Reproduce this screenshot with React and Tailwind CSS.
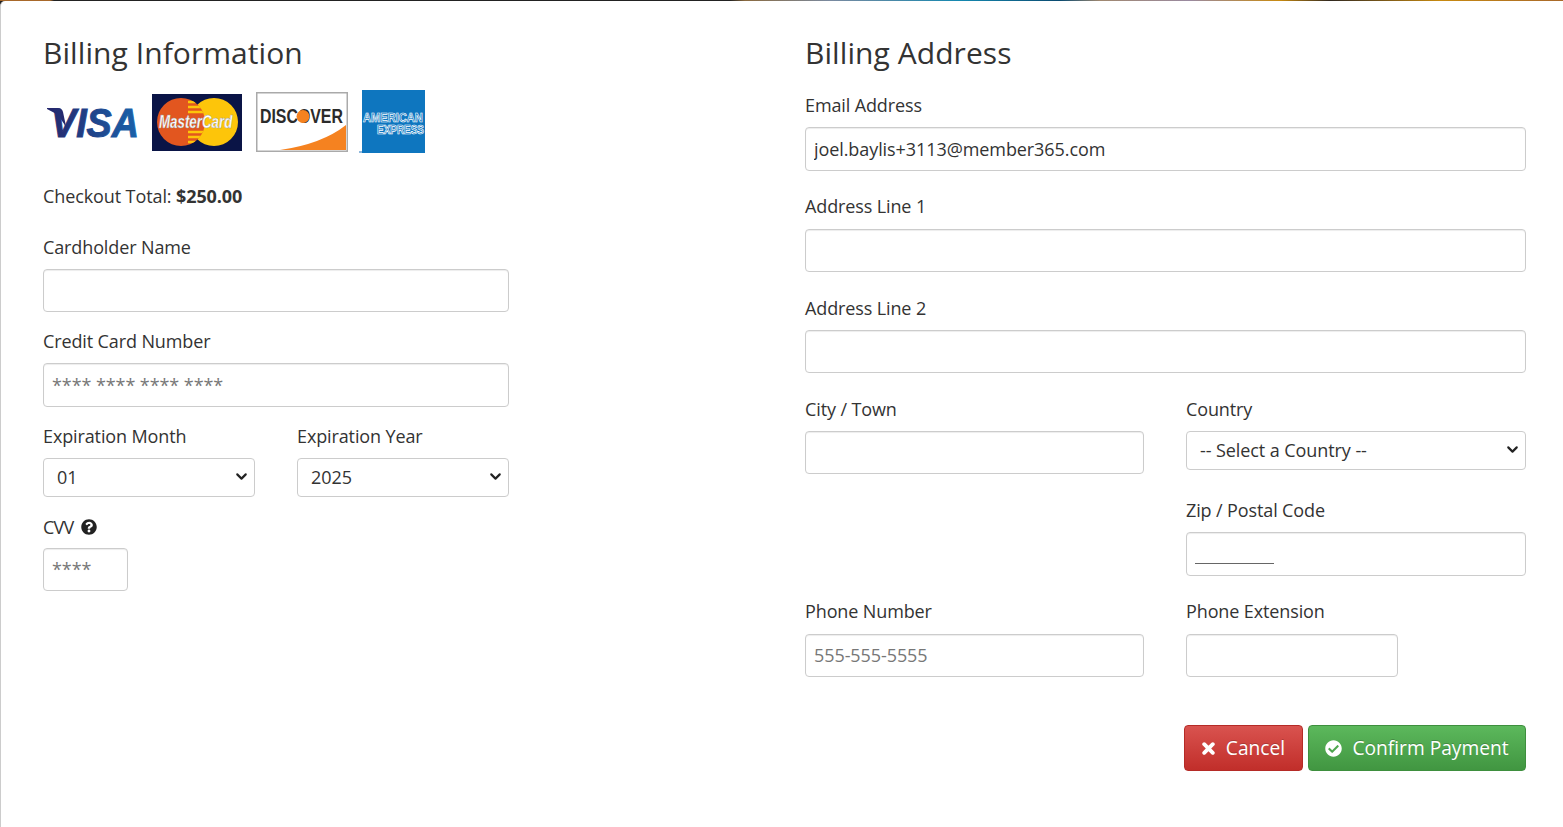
import { ChevronDown } from 'lucide-react';
import { FaCheckCircle, FaQuestionCircle } from 'react-icons/fa';

const Field = ({ label, className = '', gap = 'mb-[10px]', children }) => (
  <div className={className}>
    <label className={`block h-[24px] leading-[24px] ${gap} text-[18px] tracking-[-0.12px] text-[#333]`}>{label}</label>
    {children}
  </div>
);

const boxCls =
  'block w-full px-2 rounded border border-[#ccc] bg-white text-[18px] tracking-[-0.08px] text-[#333] placeholder:text-[#777] shadow-[inset_0_1px_1px_rgba(0,0,0,0.075)] outline-none';

const Select = ({ value }) => (
  <div className="relative">
    <select
      defaultValue={value}
      className="block w-full h-[39px] pl-[13px] pr-6 appearance-none rounded border border-[#ccc] bg-white text-[18px] tracking-[-0.08px] text-[#333] outline-none"
    >
      <option>{value}</option>
    </select>
    <ChevronDown size={17} strokeWidth={3} className="absolute right-[5px] top-[10px] text-[#222] pointer-events-none" />
  </div>
);

// card logos, drawn small like the scaled images in the page
const VisaLogo = () => (
  <svg width="96" height="36" viewBox="0 0 96 36" className="ml-[4px] mr-[9px] mt-[15px]">
    <defs>
      <linearGradient id="visaBlue" x1="0" x2="1" y1="0" y2="0">
        <stop offset="0" stopColor="#25296e" />
        <stop offset="1" stopColor="#1a62ab" />
      </linearGradient>
    </defs>
    <path d="M0 3 H11 Q15 3 16 7 L20 26 Q15 10 0 4 Z" fill="#25296e" />
    <text transform="translate(4 32) scale(.92 1)" fontFamily="'Liberation Sans', sans-serif" fontSize="41" fontWeight="700" fontStyle="italic" fill="url(#visaBlue)" stroke="url(#visaBlue)" strokeWidth="1">VISA</text>
  </svg>
);

const MasterCardLogo = () => (
  <svg width="90" height="57" viewBox="0 0 90 57" className="mr-[14px] mt-[4px]">
    <defs>
      <clipPath id="mcLeft">
        <circle cx="29" cy="28" r="24" />
      </clipPath>
    </defs>
    <rect width="90" height="57" fill="#0a1446" />
    <circle cx="62" cy="28" r="24" fill="#fdc50a" />
    <circle cx="29" cy="28" r="24" fill="#e2561f" />
    <path d="M36 8 h20 M36 13 h20 M36 18 h20 M36 38 h20 M36 43 h20 M36 48 h20" stroke="#fdc50a" strokeWidth="2.5" clipPath="url(#mcLeft)" />
    <text transform="translate(7 34) scale(.74 1)" fontFamily="'Liberation Sans', sans-serif" fontSize="18" fontWeight="700" fontStyle="italic" fill="#fff" stroke="#999" strokeWidth="0.4">MasterCard</text>
  </svg>
);

const DiscoverLogo = () => (
  <svg width="92" height="60" viewBox="0 0 92 60" className="mr-[11px] mt-[2px]">
    <rect x="0.75" y="0.75" width="90.5" height="58.5" fill="#fff" stroke="#aaa" strokeWidth="1.5" />
    <path d="M24 58 Q66 52 90 33 V58 Z" fill="#f58220" />
    <text transform="translate(4 31) scale(.815 1)" fontFamily="'Liberation Sans', sans-serif" fontSize="19.5" fontWeight="700" fill="#2b2b2b">DISCOVER</text>
    <circle cx="47" cy="24.5" r="6.5" fill="#f58220" />
  </svg>
);

const AmexLogo = () => (
  <svg width="66" height="63" viewBox="0 0 66 63">
    <rect x="0" y="61" width="4" height="2" fill="#8fb8dc" />
    <rect x="3" width="63" height="63" fill="#0e76bf" />
    <text transform="translate(4 32) scale(.824 1)" fontFamily="'Liberation Sans', sans-serif" fontSize="13.5" fontWeight="700" fill="#0e76bf" stroke="#fff" strokeWidth="0.7">AMERICAN</text>
    <text transform="translate(18 44) scale(.83 1)" fontFamily="'Liberation Sans', sans-serif" fontSize="12" fontWeight="700" fill="#0e76bf" stroke="#fff" strokeWidth="0.7">EXPRESS</text>
  </svg>
);

const ThickX = () => (
  <svg width="13" height="13" viewBox="0 0 13 13" className="mr-[11px]">
    <path d="M2.2 2.2 L10.8 10.8 M10.8 2.2 L2.2 10.8" stroke="#fff" strokeWidth="3.8" strokeLinecap="round" />
  </svg>
);

export default function App() {
  return (
    <div className="h-[827px] overflow-hidden bg-[#222] font-['Open_Sans',sans-serif]">
      <div className="h-px bg-[linear-gradient(90deg,#a8682a_0,#a8682a_50px,#222_54px,#222_730px,#8a6a40_745px,#7a8aa0_830px,#1488b0_960px,#0a4a70_1060px,#a08870_1100px,#9a8aa0_1190px,#c88a10_1280px,#302820_1330px,#c88a10_1440px,#a8682a_1563px)]" />
      <div className="h-[826px] rounded-tl-[5px] bg-white border-l border-[#ccc] pl-[42px] pr-[37px] flex">
        {/* left column */}
        <div className="w-[466px] shrink-0">
          <h2 className="text-[30px] leading-[36px] tracking-[0.07px] text-[#333] mt-[34px]">Billing Information</h2>
          <div className="flex items-start h-[63px] mt-[19px]">
            <VisaLogo />
            <MasterCardLogo />
            <DiscoverLogo />
            <AmexLogo />
          </div>
          <p className="text-[18px] leading-[24px] tracking-[-0.1px] text-[#333] mt-[31px]">
            Checkout Total: <b>$250.00</b>
          </p>
          <Field label="Cardholder Name" className="mt-[27px]">
            <input className={`${boxCls} h-[43px]`} />
          </Field>
          <Field label="Credit Card Number" className="mt-[17px]">
            <input className={`${boxCls} h-[44px]`} placeholder="**** **** **** ****" />
          </Field>
          <div className="grid grid-cols-2 gap-x-[42px] mt-[17px]">
            <Field label="Expiration Month">
              <Select value="01" />
            </Field>
            <Field label="Expiration Year">
              <Select value="2025" />
            </Field>
          </div>
          <div className="mt-[18px]">
            <label className="flex items-center h-[24px] mb-[9px] text-[18px] text-[#333]">
              <span className="tracking-[-0.8px]">CVV</span>
              <FaQuestionCircle size={16} className="ml-[8px] text-[#222]" />
            </label>
            <div className="w-[85px]">
              <input className={`${boxCls} h-[43px] pb-0.5`} placeholder="****" />
            </div>
          </div>
        </div>

        {/* right column */}
        <div className="w-[721px] ml-[296px] shrink-0">
          <h2 className="text-[30px] leading-[36px] tracking-[0.07px] text-[#333] mt-[34px]">Billing Address</h2>
          <Field label="Email Address" className="mt-[22px]">
            <input className={`${boxCls} h-[44px]`} defaultValue="joel.baylis+3113@member365.com" />
          </Field>
          <Field label="Address Line 1" className="mt-[23px]" gap="mb-[11px]">
            <input className={`${boxCls} h-[43px]`} />
          </Field>
          <Field label="Address Line 2" className="mt-[24px]">
            <input className={`${boxCls} h-[43px]`} />
          </Field>
          <div className="grid grid-cols-[339px_340px] gap-x-[42px] mt-[24px]">
            <Field label="City / Town">
              <input className={`${boxCls} h-[43px]`} />
            </Field>
            <div>
              <Field label="Country">
                <Select value="-- Select a Country --" />
              </Field>
              <Field label="Zip / Postal Code" className="mt-[28px]">
                <div className="h-[44px] px-2 rounded border border-[#ccc] bg-white shadow-[inset_0_1px_1px_rgba(0,0,0,0.075)]">
                  <div className="w-[79px] h-px bg-[#666] mt-[30px]" />
                </div>
              </Field>
            </div>
          </div>
          <div className="grid grid-cols-[339px_340px] gap-x-[42px] mt-[23px]">
            <Field label="Phone Number" gap="mb-[11px]">
              <input className={`${boxCls} h-[43px] pb-0.5`} placeholder="555-555-5555" />
            </Field>
            <Field label="Phone Extension" gap="mb-[11px]">
              <div className="w-[212px]">
                <input className={`${boxCls} h-[43px]`} />
              </div>
            </Field>
          </div>
          <div className="flex justify-end gap-[5px] mt-[48px]">
            <button className="flex items-center h-[46px] w-[119px] justify-center rounded border border-[#b52b27] bg-[linear-gradient(180deg,#d9534f,#c12e2a)] text-white text-[19.2px] [text-shadow:0_-1px_0_rgba(0,0,0,0.2)]">
              <ThickX />
              Cancel
            </button>
            <button className="flex items-center h-[46px] w-[218px] justify-center rounded border border-[#3e8f3e] bg-[linear-gradient(180deg,#5cb85c,#419641)] text-white text-[19.2px] [text-shadow:0_-1px_0_rgba(0,0,0,0.2)]">
              <FaCheckCircle size={17} className="mr-[10px]" />
              Confirm Payment
            </button>
          </div>
        </div>
      </div>
    </div>
  );
}
